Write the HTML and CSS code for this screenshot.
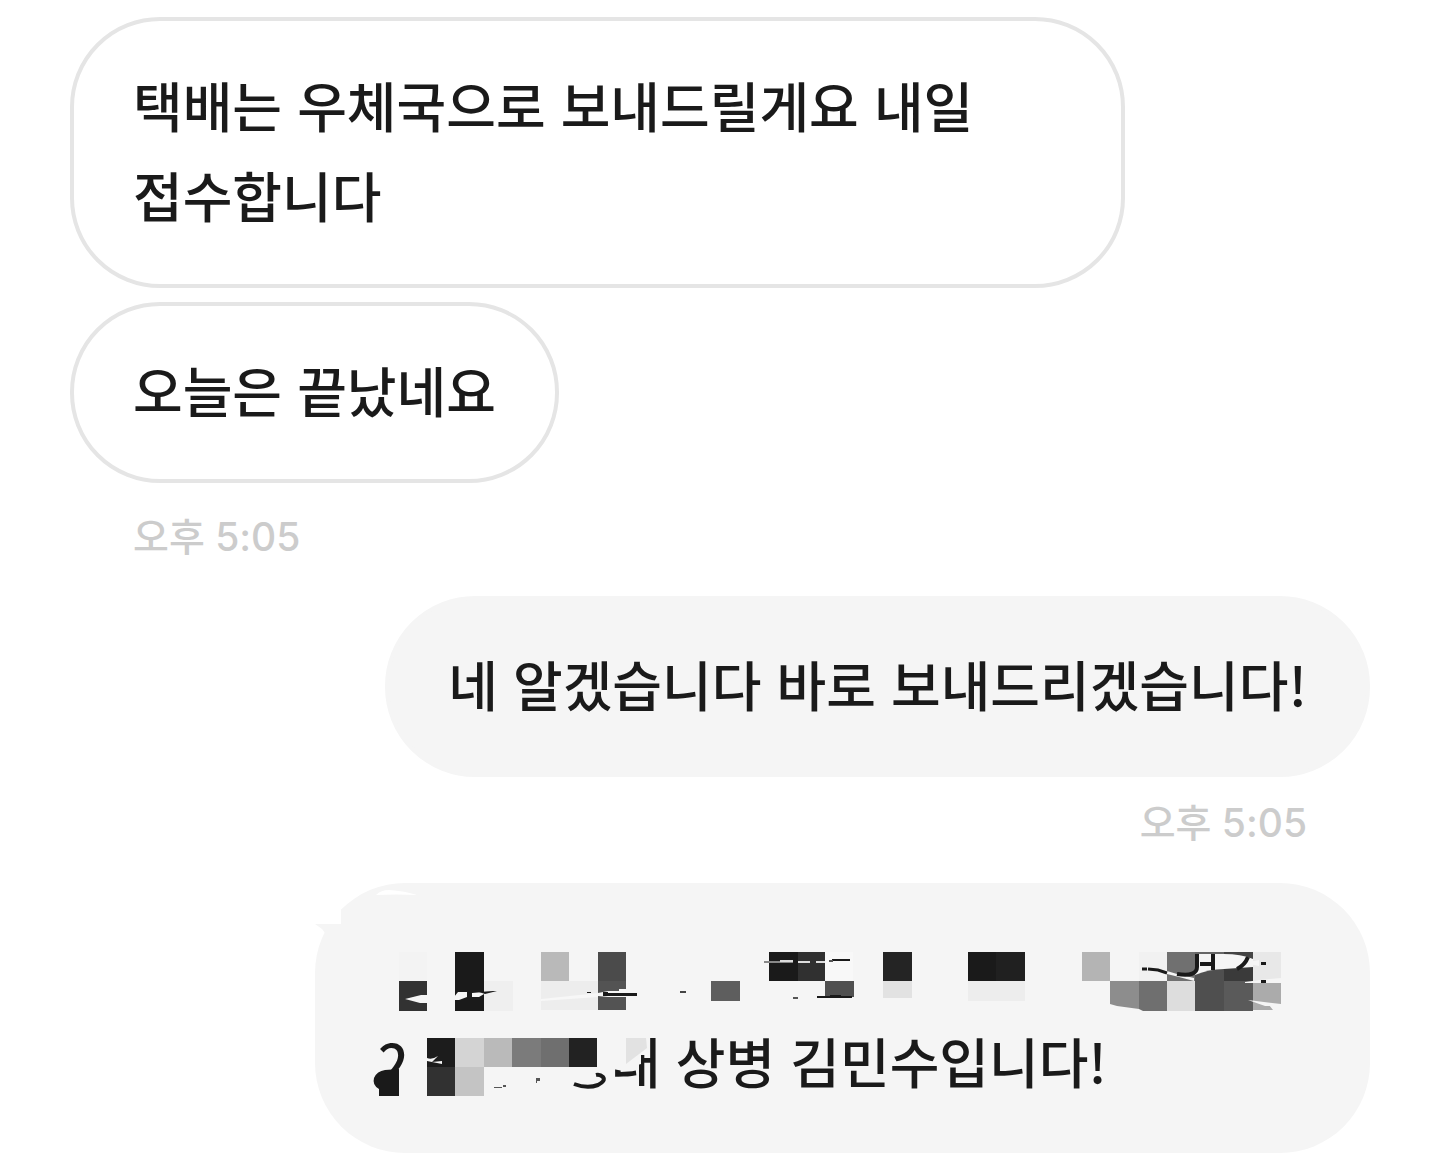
FILE: index.html
```html
<!DOCTYPE html>
<html lang="ko">

<head>
    <meta charset="UTF-8">
    <meta name="viewport" content="width=device-width, initial-scale=1.0">
    <title>채팅</title>
    <link rel="stylesheet" href="styles.css">
</head>

<body>
    <main class="chat">
        <!-- 받은 메시지 -->
        <section class="group received">
            <p class="bubble">택배는 우체국으로 보내드릴게요 내일 접수합니다</p>
            <p class="bubble">오늘은 끝났네요</p>
            <time class="time" datetime="17:05">오후 5:05</time>
        </section>

        <!-- 보낸 메시지 -->
        <section class="group sent">
            <p class="bubble">네 알겠습니다 바로 보내드리겠습니다!</p>
            <time class="time" datetime="17:05">오후 5:05</time>
        </section>

        <section class="group sent">
            <div class="bubble masked">
                <p class="masked-line"></p>
                <p class="masked-line"><span class="lead">2</span><span>대 상병 김민수입니다!</span></p>

                <!-- 모자이크 -->
                <svg class="mosaic" viewBox="0 0 1055 270" aria-hidden="true">
                    <!-- 지워진 모서리 -->
                    <path fill="#fff" d="M0 0H26V41H0Z" />
                    <path fill="#f5f5f5" d="M0 41H30V50H10L7 46Z" />
                    <path fill="#fff" d="M61 12Q66 7 74 7Q90 8 102 12Q82 11 61 12Z" />

                    <!-- 첫째 줄 -->
                    <path fill="#f3f3f3" d="M84 69h28v29h-28z" />
                    <path fill="#323232" d="M84 98h28v30h-28z" />
                    <path fill="#f5f5f5" d="M90 116L102 113L106 112H113V120H105Z" />
                    <path fill="#1a1a1a" d="M140 69h29v59h-29z" />
                    <path fill="#efefef" d="M169 98h29v30h-29z" />
                    <path fill="#f5f5f5" d="M139 114L143 109H152V114L144 117H139ZM157 110L169 109V111L164 114H157Z" />
                    <path fill="#1a1a1a" d="M164 109L178 108H182L170 111Z" />
                    <path fill="#b9b9b9" d="M226 69h28v29h-28z" />
                    <path fill="#ededed" d="M226 98h57v29h-57z" />
                    <path fill="#f7f7f7" d="M226 116L283 110V114L226 118Z" />
                    <path fill="#4b4b4b" d="M283 69h28v29h-28z" />
                    <path fill="#535353" d="M283 98h28v29h-28z" />
                    <path fill="#f5f5f5" d="M283 110L293 108H304V106H311V114H293L283 113Z" />
                    <path fill="#1a1a1a" d="M288 109h5v1h29v3h-34zM272 109h4v1h-4z" />
                    <path fill="#444" d="M365 108h6v2h-6z" />
                    <path fill="#5e5e5e" d="M396 98h29v20h-29z" />
                    <path fill="#1a1a1a" d="M454 69h29v29h-29z" />
                    <path fill="#303030" d="M483 69h27v29h-27z" />
                    <path fill="#f8f8f8" d="M510 69h28v29h-28z" />
                    <path fill="#505050" d="M510 98h29v16h-29z" />
                    <path fill="#888" d="M449 78h29v2h-29z" />
                    <path fill="#ddd" d="M465 77h13v2h-13zM483 78h12v2h-12zM501 78h9v2h-9z" />
                    <path fill="#1a1a1a" d="M517 76h18v2h-18zM502 113h35v2h-35zM515 112h11v2h-11z" />
                    <path fill="#555" d="M478 114h5v2h-5zM514 77h4v2h-4z" />
                    <path fill="#242424" d="M568 69h29v29h-29z" />
                    <path fill="#e2e2e2" d="M568 98h29v17h-29z" />
                    <path fill="#1a1a1a" d="M653 69h28v29h-28z" />
                    <path fill="#202020" d="M681 69h29v29h-29z" />
                    <path fill="#ededed" d="M653 98h57v20h-57z" />
                    <path fill="#b4b4b4" d="M767 69h28v29h-28z" />
                    <path fill="#f1f1f1" d="M824 69h28v29h-28z" />
                    <path fill="#8d8d8d" d="M795 98h29v28l-22-3-7-2z" />
                    <path fill="#6f6f6f" d="M824 98h28v30h-24l-4-2z" />
                    <path fill="#ddd" d="M852 98h28v30h-28z" />
                    <path fill="#707070" d="M852 69h28v29h-28z" />
                    <path fill="#4f4f4f" d="M880 92Q894 86 909 86V128H880Z" />
                    <path fill="#5a5a5a" d="M909 98h29v30h-29z" />
                    <path fill="#3a3a3a" d="M909 86L938 84V98H909Z" />
                    <path fill="#666" d="M880 69h29v2h-29z" />
                    <path fill="#444" d="M909 69H938V76Q926 71 909 71Z" />
                    <path fill="#e8e8e8" d="M938 69h28v29h-28z" />
                    <path fill="#ababab" d="M938 100h28v21h-28zM938 119L954 122L958 127H938Z" />
                    <path fill="#f5f5f5" d="M852 88L862 91L879 95V98L864 94L852 91ZM930 99L945 97L966 95V100H930ZM933 117L966 121V123H950ZM934 79L944 77V83L934 81Z" />
                    <path fill="none" stroke="#1a1a1a" stroke-width="3" d="M827 86h5M833 86L843 87L852 90" />
                    <path fill="none" stroke="#1a1a1a" stroke-width="4" d="M862 91Q882 94 882 84V71M898 71V87M885 81H896M933 74Q930 82 922 86" />
                    <path fill="#1a1a1a" d="M946 79h5v3h-5zM946 97h5v3h-5z" />

                    <!-- 둘째 줄 -->
                    <path fill="#f5f5f5" d="M64 190H96V213H64ZM298 150H326V181L316 184H308V188L298 186ZM326 150H330V172H326Z" />
                    <path fill="#1a1a1a" d="M64 213V206Q57 202 59 195Q62 188 70 187L84 186V213Z" />
                    <path fill="#1c1c1c" d="M112 155h28v29h-28z" />
                    <path fill="#313131" d="M112 184h28v29h-28z" />
                    <path fill="#f5f5f5" d="M112 175Q117 177 123 173L117 179L127 178V181L112 178Z" />
                    <path fill="#d4d4d4" d="M140 155h29v29h-29z" />
                    <path fill="#c4c4c4" d="M140 184h29v29h-29z" />
                    <path fill="#bababa" d="M169 155h28v29h-28z" />
                    <path fill="#7b7b7b" d="M197 155h29v29h-29z" />
                    <path fill="#6f6f6f" d="M226 155h28v29h-28z" />
                    <path fill="#222" d="M254 155h28v29h-28z" />
                    <path fill="#e2e2e2" d="M311 155H331L332 165L311 181Z" />
                    <path fill="#555" d="M179 204h8v1h-8zM188 202h3v2h-3zM221 195h4v3h-3v2h-1z" />
                    <path fill="none" stroke="#1a1a1a" stroke-width="4" d="M259 201Q272 206 283 202Q291 198 288 194Q285 191 281 192" />
                </svg>
            </div>
        </section>
    </main>
</body>

</html>
```
FILE: styles.css
```css
* {
    box-sizing: border-box;
}

body {
    margin: 0;
    background-color: #fff;
    color: #1a1a1a;
    font-family: "Noto Sans CJK KR", sans-serif;
    font-weight: 500;
}

p {
    margin: 0;
}

/* 대화 영역 */
.chat {
    display: flex;
    flex-direction: column;
    gap: 35px;
    padding: 17px 70px 0;
}

.group {
    display: flex;
    flex-direction: column;
    align-items: flex-start;
}

.sent {
    align-items: flex-end;
}

/* 말풍선 */
.bubble {
    max-width: 1055px;
    padding: 39px 59px 44px;
    border: 4px solid #e5e5e5;
    border-radius: 90px;
    font-size: 54px;
    line-height: 90px;
    word-break: keep-all;
}

.bubble + .bubble {
    margin-top: 14px;
}

.sent .bubble {
    border-color: #f5f5f5;
    background-color: #f5f5f5;
}

/* 시간 */
.time {
    padding: 0 63px;
    margin-top: 29px;
    color: #ccc;
    font-family: Inter, "Noto Sans CJK KR", sans-serif;
    font-size: 39px;
    line-height: 50px;
}

.received .time {
    margin-bottom: -1px;
}

.sent .time {
    margin-top: 21px;
}

/* 가려진 메시지 */
.sent .masked {
    position: relative;
    width: 100%;
    padding-bottom: 43px;
    border-color: transparent;
}

.masked-line {
    display: flex;
    min-height: 90px;
}

.lead {
    width: 233px;
}

.mosaic {
    position: absolute;
    top: -4px;
    left: -4px;
    width: 1055px;
    height: 270px;
}
```
